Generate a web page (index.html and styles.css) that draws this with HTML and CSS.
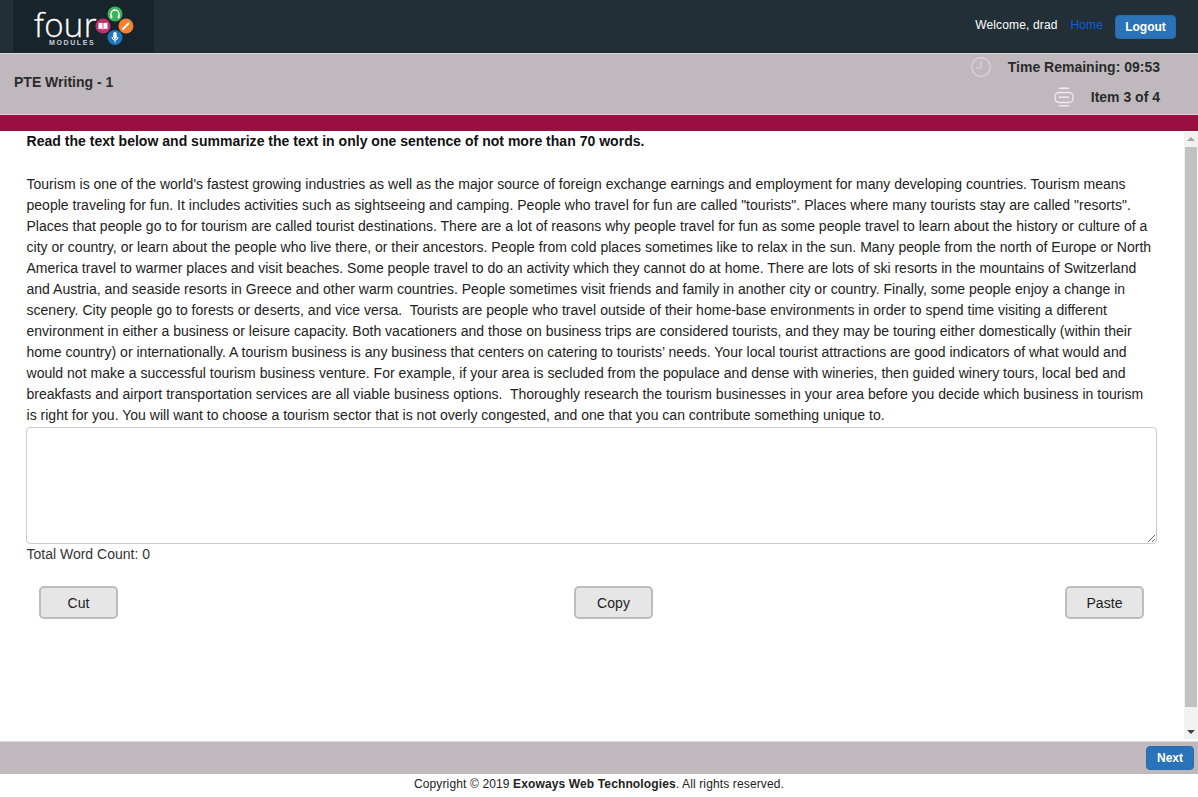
FILE: index.html
```html
<!DOCTYPE html>
<html lang="en">
<head>
<meta charset="utf-8">
<title>PTE Writing - 1</title>
<link rel="stylesheet" href="styles.css">
</head>
<body>
<header class="topbar">
  <div class="logo-box">
    <div class="logo">
      <span class="logo-word">four</span>
      <span class="logo-sub">MODULES</span>
      <svg class="logo-dots" width="42" height="40" viewBox="0 0 42 40">
        <circle cx="10" cy="20" r="7.500" fill="#c32f6c"/>
        <path d="M5.500 17c1.700-.6 3.400-.5 4.500.5 1.100-1 2.800-1.100 4.500-.5v6.200c-1.700-.6-3.400-.5-4.500.5-1.100-1-2.800-1.100-4.500-.5z" fill="#fff"/>
        <path d="M10 17.500v6.200" stroke="#c32f6c" stroke-width="0.800"/>
        <circle cx="22" cy="8" r="7.500" fill="#3cb45a"/>
        <path d="M18 10V8a4 4 0 0 1 8 0v2" fill="none" stroke="#fff" stroke-width="1.300"/>
        <rect x="17.300" y="9" width="2" height="3.500" rx="1" fill="#fff"/>
        <rect x="24.700" y="9" width="2" height="3.500" rx="1" fill="#fff"/>
        <circle cx="33" cy="20" r="7.500" fill="#f08231"/>
        <path d="M29.500 23.500l6.500-6.500" stroke="#fff" stroke-width="1.800"/>
        <circle cx="22" cy="31.500" r="7.500" fill="#1f78bd"/>
        <rect x="20.300" y="26" width="3.400" height="7" rx="1.700" fill="#fff"/>
        <path d="M19 31a3 3 0 0 0 6 0M22 34v2.500" fill="none" stroke="#fff" stroke-width="1"/>
      </svg>
    </div>
  </div>
  <div class="user-nav">
    <span class="welcome">Welcome, drad</span>
    <a class="home-link" href="#">Home</a>
    <button class="btn-primary btn-logout" type="button">Logout</button>
  </div>
</header>
<section class="titlebar">
  <h1 class="test-title">PTE Writing - 1</h1>
  <div class="status">
    <div class="status-row">
      <svg class="status-icon" width="20" height="20" viewBox="0 0 20 20">
        <circle cx="10" cy="10" r="9.300" fill="none" stroke="#dcd9db" stroke-width="1.200"/>
        <path d="M10 4v7H5" fill="none" stroke="#dcd9db" stroke-width="1"/>
      </svg>
      <span class="status-time">Time Remaining: 09:53</span>
    </div>
    <div class="status-row">
      <svg class="status-icon" width="20" height="20" viewBox="0 0 20 20">
        <rect x="5" y="0.500" width="10" height="1.500" fill="#eeeced"/>
        <rect x="1" y="5.500" width="18" height="10" rx="4" fill="none" stroke="#eeeced" stroke-width="1.300"/>
        <rect x="5" y="9.500" width="10" height="1.500" fill="#eeeced"/>
        <rect x="5" y="18" width="10" height="1.500" fill="#eeeced"/>
      </svg>
      <span class="status-item">Item 3 of 4</span>
    </div>
  </div>
</section>
<div class="accent"></div>
<main class="content">
  <div class="pane">
    <p class="prompt">Read the text below and summarize the text in only one sentence of not more than 70 words.</p>
    <p class="passage">Tourism is one of the world's fastest growing industries as well as the major source of foreign exchange earnings and employment for many developing countries. Tourism means people traveling for fun. It includes activities such as sightseeing and camping. People who travel for fun are called "tourists". Places where many tourists stay are called "resorts". Places that people go to for tourism are called tourist destinations. There are a lot of reasons why people travel for fun as some people travel to learn about the history or culture of a city or country, or learn about the people who live there, or their ancestors. People from cold places sometimes like to relax in the sun. Many people from the north of Europe or North America travel to warmer places and visit beaches. Some people travel to do an activity which they cannot do at home. There are lots of ski resorts in the mountains of Switzerland and Austria, and seaside resorts in Greece and other warm countries. People sometimes visit friends and family in another city or country. Finally, some people enjoy a change in scenery. City people go to forests or deserts, and vice versa.&nbsp; Tourists are people who travel outside of their home-base environments in order to spend time visiting a different environment in either a business or leisure capacity. Both vacationers and those on business trips are considered tourists, and they may be touring either domestically (within their home country) or internationally. A tourism business is any business that centers on catering to tourists’ needs. Your local tourist attractions are good indicators of what would and would not make a successful tourism business venture. For example, if your area is secluded from the populace and dense with wineries, then guided winery tours, local bed and breakfasts and airport transportation services are all viable business options.&nbsp; Thoroughly research the tourism businesses in your area before you decide which business in tourism is right for you. You will want to choose a tourism sector that is not overly congested, and one that you can contribute something unique to.</p>
    <textarea class="answer"></textarea>
    <div class="word-count">Total Word Count: 0</div>
    <div class="actions">
      <button class="btn-edit" type="button">Cut</button>
      <button class="btn-edit btn-copy" type="button">Copy</button>
      <button class="btn-edit" type="button">Paste</button>
    </div>
  </div>
  <div class="scrollbar">
    <div class="sb-arrow sb-up"></div>
    <div class="sb-thumb"></div>
    <div class="sb-arrow sb-down"></div>
  </div>
</main>
<section class="bottombar">
  <button class="btn-primary btn-next" type="button">Next</button>
</section>
<footer class="copyright">Copyright © 2019 <strong>Exoways Web Technologies</strong>. All rights reserved.</footer>
</body>
</html>
```
FILE: styles.css
```css
* { box-sizing: border-box; }
html, body { margin: 0; height: 797px; overflow: hidden; }
body {
  font-family: "Liberation Sans", Arial, sans-serif;
  font-size: 14px;
  color: #222;
  background: #fff;
  display: flex;
  flex-direction: column;
}
.topbar {
  height: 53px;
  flex: none;
  display: flex;
  justify-content: space-between;
  background: #222f36;
  border-bottom: 1px solid #1a252b;
}
.logo-box {
  width: 141px;
  margin-left: 13px;
  background: #18242b;
  padding-left: 21px;
}
.logo {
  position: relative;
  width: 110px;
  height: 52px;
  display: flex;
  flex-direction: column;
  padding-top: 13px;
}
.logo-word {
  font-family: "Open Sans", sans-serif;
  font-weight: 300;
  font-size: 33px;
  line-height: 24px;
  letter-spacing: 0.300px;
  -webkit-text-stroke: 0.300px #fff;
  color: #fff;
}
.logo-sub {
  margin: 1px 0 0 15px;
  font-size: 7px;
  line-height: 9px;
  letter-spacing: 1.600px;
  font-weight: 700;
  color: #c9ced1;
}
.logo-dots { position: absolute; left: 59px; top: 6px; }
.user-nav {
  display: flex;
  align-items: center;
  padding-right: 22px;
  height: 52px;
}
.welcome { color: #fff; font-size: 12px; letter-spacing: 0.150px; margin-top: -2px; }
.home-link { color: #0d5fe0; font-size: 12px; letter-spacing: 0.100px; text-decoration: none; margin: -2px 0 0 13px; }
.btn-primary {
  background: #2a73b8;
  border: 1px solid #2a6cab;
  border-radius: 4px;
  color: #fff;
  font-family: inherit;
  font-weight: 700;
  font-size: 12px;
  padding: 0;
}
.btn-logout { width: 61px; height: 24px; margin: 2px 0 0 12px; }
.titlebar {
  height: 61px;
  flex: none;
  background: #bfb9bd;
  border-top: 1px solid #dcdadb;
  display: flex;
  justify-content: space-between;
  align-items: center;
  padding: 0 38px 0 14px;
}
.test-title {
  margin: -5px 0 0;
  font-size: 14px;
  font-weight: 700;
  color: #2b2b2b;
}
.status {
  display: flex;
  flex-direction: column;
  align-items: flex-end;
  gap: 9px;
  margin-top: -4px;
}
.status-row { display: flex; align-items: center; height: 21px; font-weight: 700; color: #2b2b2b; }
.status-icon { margin-right: 17px; }
.accent {
  height: 17px;
  flex: none;
  background: #9b0f40;
  border-top: 1px solid #d8d4d6;
}
.content {
  height: 610px;
  flex: none;
  display: flex;
  overflow: hidden;
}
.pane {
  flex: 1;
  padding: 0 27px 0 26px;
  min-width: 0;
}
.prompt {
  margin: 0;
  padding-left: 0.5px;
  font-weight: 700;
  line-height: 20px;
  letter-spacing: 0.020px;
  color: #111;
}
.passage {
  margin: 23px 0 0;
  padding: 0 4px 0 0.5px;
  line-height: 21px;
  letter-spacing: 0.015px;
  color: #222;
}
.answer {
  display: block;
  width: 100%;
  height: 117px;
  margin-top: 1px;
  border: 1px solid #ccc;
  border-radius: 4px;
  background: #fff;
  outline: none;
}
.word-count { padding-left: 0.5px; line-height: 20px; color: #333; }
.actions {
  display: flex;
  justify-content: space-between;
  padding: 0 13px;
  margin-top: 22px;
}
.btn-edit {
  width: 79px;
  height: 33px;
  background: #e6e6e6;
  border: 2px solid #bdbdbd;
  border-radius: 5px;
  color: #222;
  font-family: inherit;
  font-size: 14px;
  letter-spacing: 0.050px;
  padding: 0;
}
.btn-copy { margin-left: 44px; }
.scrollbar {
  width: 14px;
  flex: none;
  background: #f1f1f1;
  margin: 1px 0 2px;
  display: flex;
  flex-direction: column;
  align-items: center;
}
.sb-arrow { width: 0; height: 0; border-left: 4px solid transparent; border-right: 4px solid transparent; flex: none; }
.sb-up { border-bottom: 4px solid #a3a3a3; margin: 5px 0 6px; }
.sb-down { border-top: 4px solid #444; margin: 23px 0 5px; }
.sb-thumb { width: 12px; flex: 1; background: #c1c1c1; }
.bottombar {
  height: 33px;
  flex: none;
  background: #bfb9bd;
  border-top: 1px solid #dcdadb;
  display: flex;
  justify-content: flex-end;
  align-items: center;
  padding-right: 4px;
}
.btn-next { width: 48px; height: 24px; margin-top: -1px; }
.copyright {
  flex: 1;
  text-align: center;
  font-size: 12px;
  line-height: 20px;
  letter-spacing: 0.130px;
  color: #222;
}
```
